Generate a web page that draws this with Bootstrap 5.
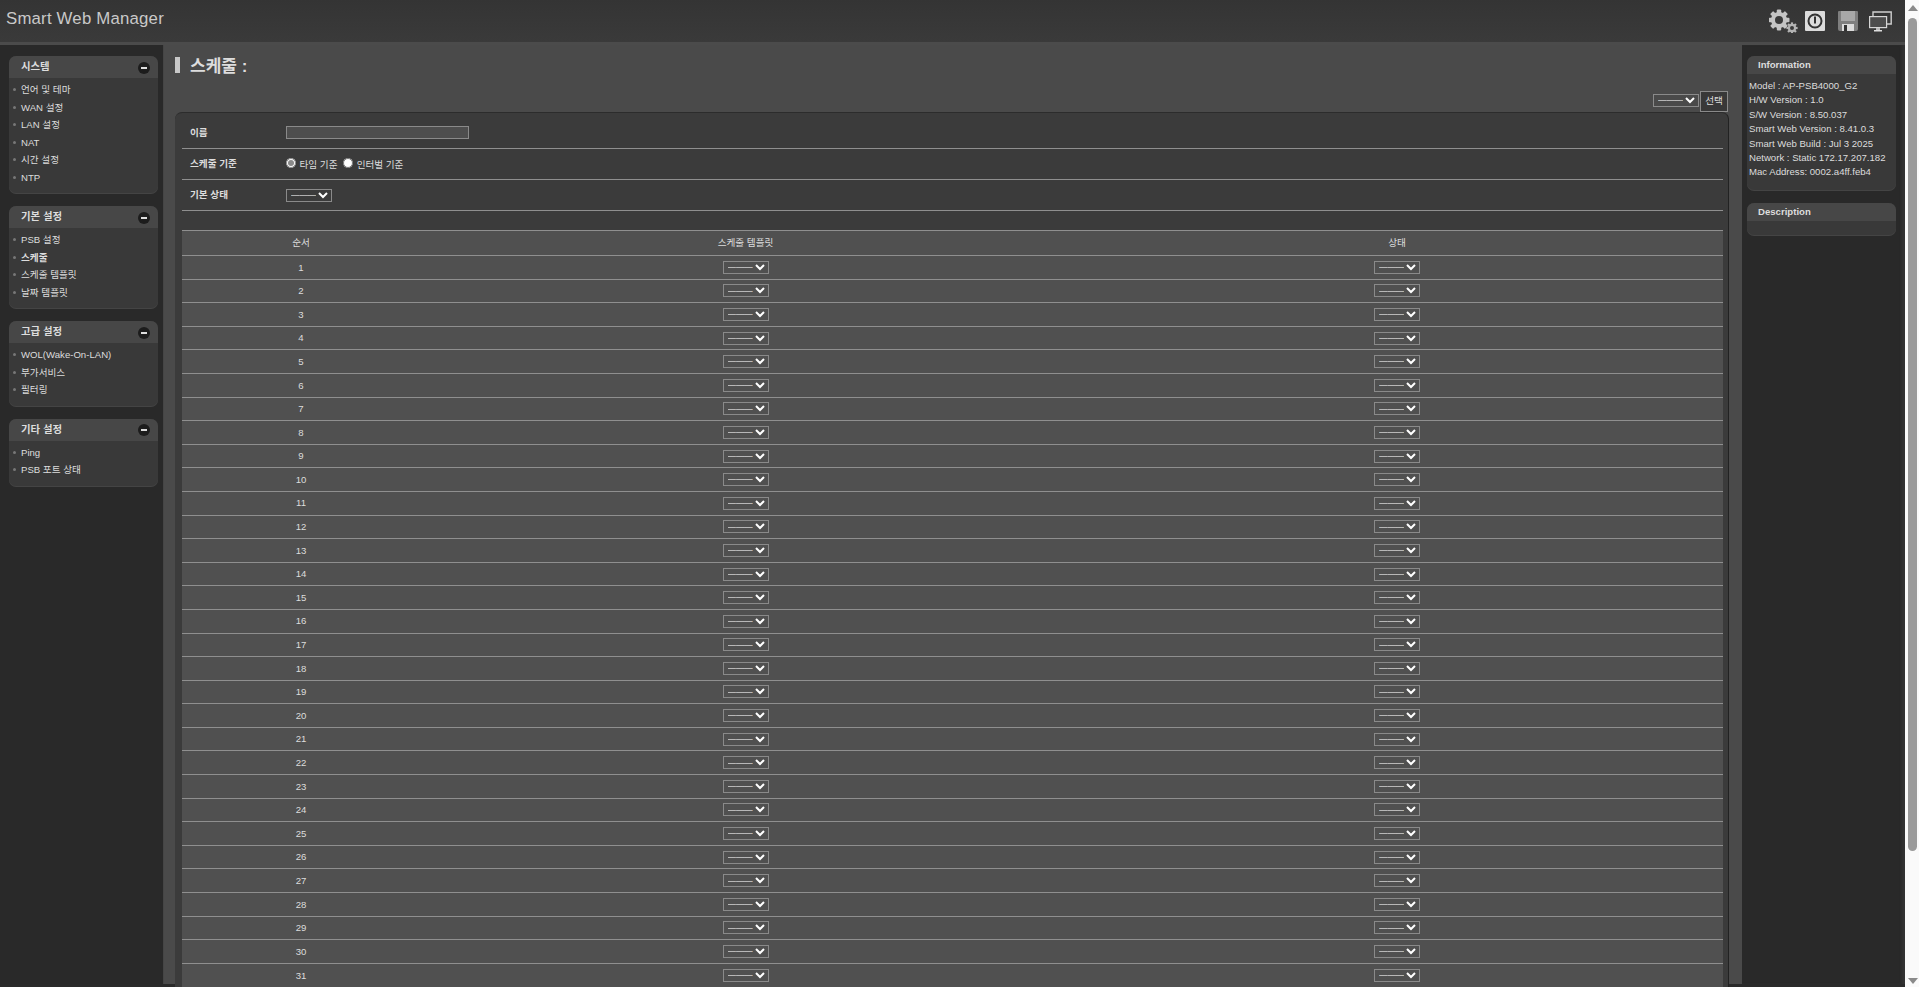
<!DOCTYPE html>
<html lang="ko">
<head>
<meta charset="utf-8">
<title>Smart Web Manager</title>
<link href="https://cdn.jsdelivr.net/npm/bootstrap@5.3.0/dist/css/bootstrap.min.css" rel="stylesheet">
<style>
html,body{height:100%;overflow:hidden;background:#2a2a2a}
body{font-family:"Liberation Sans","Noto Sans CJK KR",sans-serif;font-size:9.6px;line-height:1.2;color:#ddd}
.swm-shell{height:987px}
.swm-app{width:1905px;flex:none;overflow:hidden}
.swm-scroll{width:14px;flex:none;background:#fafafa;padding:0 0 0 3px}
.swm-arrow-up{width:0;height:0;border:5px solid transparent;border-top:0;border-bottom:6px solid #8a8a8a;margin:5px 0 7px}
.swm-thumb{width:9px;height:833px;background:#9a9a9a;border-radius:5px}
.swm-arrow-down{width:0;height:0;border:5px solid transparent;border-bottom:0;border-top:6px solid #8a8a8a;margin-top:auto;margin-bottom:3px}
.swm-top{height:42px;background:linear-gradient(#343434,#3a3a3a);padding:0 13px 0 6px}
.swm-brand{font-size:16.8px;letter-spacing:.2px;color:#c9c9c9;margin-top:-3px}
.swm-tools svg{display:block}
.swm-body{border-top:3px solid #4b4b4b;height:942px}
.swm-left{width:163px;flex:none;background:#292929;padding:11px 5px 0 9px}
.swm-right{width:163px;flex:none;background:#292929;padding:11px 9px 0 5px;box-shadow:inset -4px 0 3px -1px #333}
.swm-main{width:1579px;flex:none;background:#4a4a4a;padding:0 13px 0 11px;border-left:1px solid #454545}
.swm-box{background:#393939;border-radius:7px;margin-bottom:13px;box-shadow:0 1px 0 #444}
.swm-box-head{height:22px;background:#474747;border-radius:7px 7px 0 0;padding:1px 8px 0 12px;font-weight:700;font-size:10.4px;color:#ddd}
.swm-toggle{width:12px;height:12px;border-radius:50%;background:#1c1c1c;position:relative}
.swm-toggle::after{content:"";position:absolute;left:3px;right:3px;top:5px;height:2px;background:#ddd}
.swm-menu{list-style:none;margin:0;padding:3px 0 7px 12px}
.swm-menu li{height:17.5px;line-height:17.5px;position:relative}
.swm-menu li::before{content:"";position:absolute;left:-8px;top:7px;width:3px;height:3px;background:#777;border-radius:50%}
.swm-menu a{color:#ddd;text-decoration:none}
.swm-menu a.swm-on{font-weight:700}
.swm-info-head{height:18px;background:#474747;border-radius:7px 7px 0 0;padding:0 11px;font-weight:700;font-size:9.6px;color:#ddd}
.swm-info{padding:5px 0 10px 2px;line-height:14.4px;color:#ddd;white-space:nowrap}
.swm-desc{height:32px}
.swm-title-row{height:45px;padding-top:12px}
.swm-bar{width:5px;height:16px;background:#c8c8c8;margin-right:10px}
.swm-title{font-size:17px;font-weight:700;color:#ddd;margin:0}
.swm-pick-row{height:22px;gap:1px;margin-right:1px}
.swm-select{appearance:none;-webkit-appearance:none;width:46px;height:13px;font-size:8.4px;line-height:1;padding:0 15px 0 4px;color:#fff;background-color:transparent;background-image:url("data:image/svg+xml,%3Csvg xmlns='http://www.w3.org/2000/svg' viewBox='0 0 10 7'%3E%3Cpath d='M1 1l4 4 4-4' fill='none' stroke='%23fff' stroke-width='2'/%3E%3C/svg%3E");background-repeat:no-repeat;background-position:right 3px center;background-size:10px 7px;border:1px solid #8a8a8a;border-radius:0}
.swm-select option{background:#4a4a4a}
.swm-pick-row .swm-select{margin-top:-2px}
.swm-btn{width:28px;height:21px;padding:0;font-size:9.6px;color:#ddd;background:#383838;border:1px solid #8a8a8a;border-radius:0}
.swm-panel{background:#3b3b3b;border-radius:7px 7px 0 0;border-right:1px solid #222;border-top:1px solid #2c2c2c;padding:0 5px 0 7px}
.swm-field{border-bottom:1px solid #8f8f8f;padding-left:8px}
.swm-f1{height:36px;padding-top:4px}.swm-f2,.swm-f3{height:31px}
.swm-label{width:96px;font-weight:700;flex:none}
.swm-input{width:183px;height:13px;background:#4e4e4e;border:1px solid #8a8a8a;padding:0}
.swm-radio{width:10px;height:10px;margin:0 3.5px 0 0;accent-color:#8a8a8a;vertical-align:0}
.swm-gap{margin-left:3px}
.swm-table-wrap{margin-top:19px}
table.swm-table{width:1541px;border-collapse:collapse;table-layout:fixed;margin:0}
.swm-table th,.swm-table td{font-weight:400;text-align:center;vertical-align:middle;padding:0;border-width:1px 0 0;border-style:solid;border-color:#8f8f8f;height:23.6px;background:#505050;color:#ddd;box-shadow:none}
.swm-table th{height:25px}
.swm-table .swm-select{display:block;margin:0 auto}
.swm-c1{width:238px}.swm-c2{width:651px}.swm-c3{width:652px}
</style>
</head>
<body>
<div class="swm-shell d-flex">
 <div class="swm-app">
  <header class="swm-top d-flex align-items-center justify-content-between">
   <div class="swm-brand">Smart Web Manager</div>
   <div class="swm-tools">
    <svg width="123" height="24" viewBox="0 0 123 24" aria-hidden="true">
     <g fill="#c4c4c4" transform="translate(10,11)">
      <circle r="8"/>
      <rect x="-2.2" y="-10.5" width="4.4" height="21" rx="1"/>
      <rect x="-2.2" y="-10.5" width="4.4" height="21" rx="1" transform="rotate(45)"/>
      <rect x="-2.2" y="-10.5" width="4.4" height="21" rx="1" transform="rotate(90)"/>
      <rect x="-2.2" y="-10.5" width="4.4" height="21" rx="1" transform="rotate(135)"/>
      <circle r="4" fill="#3a3a3a"/>
     </g>
     <g fill="#b4b4b4" transform="translate(23,19)">
      <circle r="4.2"/>
      <rect x="-1.1" y="-5.6" width="2.2" height="11.2"/>
      <rect x="-1.1" y="-5.6" width="2.2" height="11.2" transform="rotate(45)"/>
      <rect x="-1.1" y="-5.6" width="2.2" height="11.2" transform="rotate(90)"/>
      <rect x="-1.1" y="-5.6" width="2.2" height="11.2" transform="rotate(135)"/>
      <circle r="2" fill="#3a3a3a"/>
     </g>
     <rect x="36" y="2" width="20" height="20" rx="1" fill="#dcdcdc"/>
     <circle cx="46" cy="12" r="6.5" fill="none" stroke="#333" stroke-width="2"/>
     <rect x="45" y="7.5" width="2" height="7" fill="#333"/>
     <path d="M70 2h18a1 1 0 0 1 1 1v17a2 2 0 0 1-2 2H71a2 2 0 0 1-2-2V3a1 1 0 0 1 1-1z" fill="#7f7f7f"/>
     <rect x="72" y="2" width="14" height="10" fill="#a8a8a8"/>
     <rect x="73" y="15" width="12" height="7" fill="#dcdcdc"/>
     <rect x="75" y="16" width="3" height="6" fill="#333"/>
     <path d="M104 7V3h18.2v12H118" fill="none" stroke="#cfcfcf" stroke-width="1.4"/>
     <rect x="100.6" y="7.6" width="17" height="11" fill="#4d4d4d" stroke="#d6d6d6" stroke-width="1.2"/>
     <rect x="107" y="19" width="4" height="2" fill="#bbb"/>
     <rect x="105" y="21" width="8" height="1.5" fill="#ddd"/>
    </svg>
   </div>
  </header>
  <div class="swm-body d-flex">
   <aside class="swm-left">
    <section class="swm-box">
     <div class="swm-box-head d-flex align-items-center justify-content-between"><span>시스템</span><span class="swm-toggle"></span></div>
     <ul class="swm-menu"><li><a href="#">언어 및 테마</a></li><li><a href="#">WAN 설정</a></li><li><a href="#">LAN 설정</a></li><li><a href="#">NAT</a></li><li><a href="#">시간 설정</a></li><li><a href="#">NTP</a></li></ul>
    </section>
    <section class="swm-box">
     <div class="swm-box-head d-flex align-items-center justify-content-between"><span>기본 설정</span><span class="swm-toggle"></span></div>
     <ul class="swm-menu"><li><a href="#">PSB 설정</a></li><li><a href="#" class="swm-on">스케줄</a></li><li><a href="#">스케줄 템플릿</a></li><li><a href="#">날짜 템플릿</a></li></ul>
    </section>
    <section class="swm-box">
     <div class="swm-box-head d-flex align-items-center justify-content-between"><span>고급 설정</span><span class="swm-toggle"></span></div>
     <ul class="swm-menu"><li><a href="#">WOL(Wake-On-LAN)</a></li><li><a href="#">부가서비스</a></li><li><a href="#">필터링</a></li></ul>
    </section>
    <section class="swm-box">
     <div class="swm-box-head d-flex align-items-center justify-content-between"><span>기타 설정</span><span class="swm-toggle"></span></div>
     <ul class="swm-menu"><li><a href="#">Ping</a></li><li><a href="#">PSB 포트 상태</a></li></ul>
    </section>
   </aside>
   <main class="swm-main">
    <div class="swm-title-row d-flex align-items-start">
     <span class="swm-bar"></span><h1 class="swm-title">스케줄 :</h1>
    </div>
    <div class="swm-pick-row d-flex justify-content-end align-items-center">
     <select class="swm-select"><option>———</option></select>
     <button type="button" class="swm-btn">선택</button>
    </div>
    <div class="swm-panel">
     <div class="swm-field swm-f1 d-flex align-items-center"><span class="swm-label">이름</span><input class="swm-input" type="text" aria-label="이름"></div>
     <div class="swm-field swm-f2 d-flex align-items-center"><span class="swm-label">스케줄 기준</span><span><input class="swm-radio" type="radio" name="sc" checked aria-label="타임 기준">타임 기준 <input class="swm-radio swm-gap" type="radio" name="sc" aria-label="인터벌 기준">인터벌 기준</span></div>
     <div class="swm-field swm-f3 d-flex align-items-center"><span class="swm-label">기본 상태</span><select class="swm-select"><option>———</option></select></div>
     <div class="swm-table-wrap">
      <table class="table swm-table">
       <colgroup><col class="swm-c1"><col class="swm-c2"><col class="swm-c3"></colgroup>
       <thead><tr><th>순서</th><th>스케줄 템플릿</th><th>상태</th></tr></thead>
       <tbody id="rows"></tbody>
      </table>
     </div>
    </div>
   </main>
   <aside class="swm-right">
    <section class="swm-box">
     <div class="swm-info-head d-flex align-items-center">Information</div>
     <div class="swm-info">Model : AP-PSB4000_G2<br>H/W Version : 1.0<br>S/W Version : 8.50.037<br>Smart Web Version : 8.41.0.3<br>Smart Web Build : Jul 3 2025<br>Network : Static 172.17.207.182<br>Mac Address: 0002.a4ff.feb4</div>
    </section>
    <section class="swm-box swm-desc">
     <div class="swm-info-head d-flex align-items-center">Description</div>
    </section>
   </aside>
  </div>
 </div>
 <div class="swm-scroll d-flex flex-column">
  <div class="swm-arrow-up"></div>
  <div class="swm-thumb"></div>
  <div class="swm-arrow-down"></div>
 </div>
</div>
<script>
var h='';for(var i=1;i<=31;i++){h+='<tr><td>'+i+'</td><td><select class="swm-select"><option>———</option></select></td><td><select class="swm-select"><option>———</option></select></td></tr>';}
document.getElementById('rows').innerHTML=h;
</script>
<script src="https://cdn.jsdelivr.net/npm/bootstrap@5.3.0/dist/js/bootstrap.bundle.min.js"></script>
</body>
</html>
